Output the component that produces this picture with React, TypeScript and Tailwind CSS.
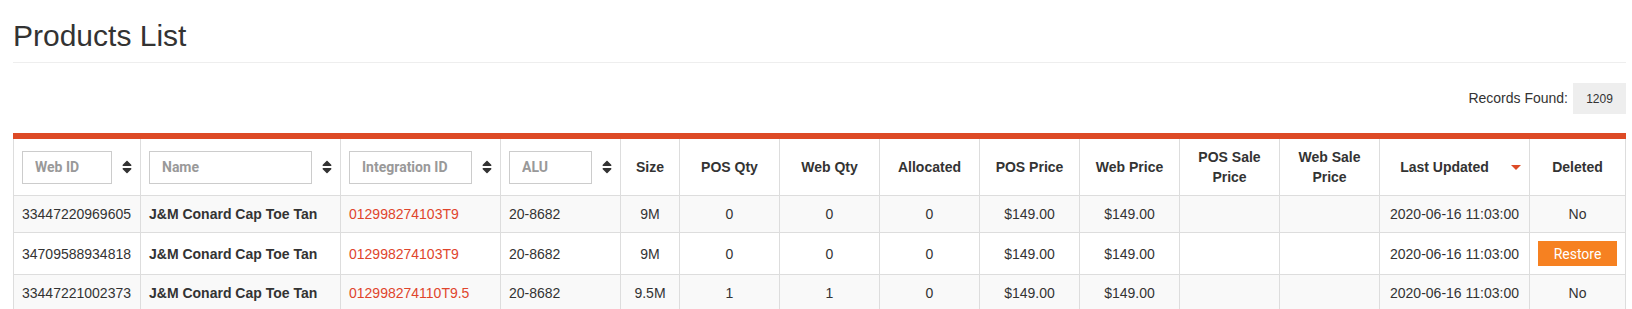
import React from 'react';

interface Product {
  webId: string;
  name: string;
  integrationId: string;
  alu: string;
  size: string;
  posQty: number;
  webQty: number;
  allocated: number;
  posPrice: string;
  webPrice: string;
  posSalePrice: string;
  webSalePrice: string;
  lastUpdated: string;
  deleted: boolean;
}

const products: Product[] = [
  {
    webId: '33447220969605',
    name: 'J&M Conard Cap Toe Tan',
    integrationId: '012998274103T9',
    alu: '20-8682',
    size: '9M',
    posQty: 0,
    webQty: 0,
    allocated: 0,
    posPrice: '$149.00',
    webPrice: '$149.00',
    posSalePrice: '',
    webSalePrice: '',
    lastUpdated: '2020-06-16 11:03:00',
    deleted: false,
  },
  {
    webId: '34709588934818',
    name: 'J&M Conard Cap Toe Tan',
    integrationId: '012998274103T9',
    alu: '20-8682',
    size: '9M',
    posQty: 0,
    webQty: 0,
    allocated: 0,
    posPrice: '$149.00',
    webPrice: '$149.00',
    posSalePrice: '',
    webSalePrice: '',
    lastUpdated: '2020-06-16 11:03:00',
    deleted: true,
  },
  {
    webId: '33447221002373',
    name: 'J&M Conard Cap Toe Tan',
    integrationId: '012998274110T9.5',
    alu: '20-8682',
    size: '9.5M',
    posQty: 1,
    webQty: 1,
    allocated: 0,
    posPrice: '$149.00',
    webPrice: '$149.00',
    posSalePrice: '',
    webSalePrice: '',
    lastUpdated: '2020-06-16 11:03:00',
    deleted: false,
  },
];

// up/down sort arrows
const SortIcon = () => (
  <svg className="w-[10px] h-[16px] shrink-0" viewBox="0 0 320 512" fill="#333">
    <path d="M41 288h238c21.4 0 32.1 25.9 17 41L177 448c-9.4 9.4-24.6 9.4-33.9 0L24 329c-15.1-15.1-4.4-41 17-41zm255-105L177 64c-9.4-9.4-24.6-9.4-33.9 0L24 183c-15.1 15.1-4.4 41 17 41h238c21.4 0 32.1-25.9 17-41z" />
  </svg>
);

const FilterHeader = ({ placeholder }: { placeholder: string }) => (
  <th className="border border-t-0 border-[#ddd] px-2 py-2 align-middle">
    <div className="flex items-center gap-[10px]">
      <input
        type="text"
        placeholder={placeholder}
        className="min-w-0 flex-1 h-[33px] border border-[#ccc] bg-white px-3 text-[14px] font-bold font-['Roboto',sans-serif] text-[#333] placeholder:font-bold placeholder:text-[#999] outline-none"
      />
      <SortIcon />
    </div>
  </th>
);

const TextHeader = ({ label }: { label: string }) => (
  <th className="border border-t-0 border-[#ddd] px-2 py-2 text-center align-middle font-bold leading-5">
    {label}
  </th>
);

const App: React.FC = () => {
  return (
    <div className="min-h-screen bg-white pl-[13px] pr-[6px] font-['Liberation_Sans',Arial,sans-serif] text-[14px] text-[#333]">
      {/* Page title */}
      <div className="pt-[19px] pb-[10px] border-b border-[#eee]">
        <h1 className="text-[30px] leading-[33px] font-normal">Products List</h1>
      </div>

      {/* Records count */}
      <div className="flex items-center justify-end gap-[5px] mt-[20px] mb-[19px]">
        <span>Records Found:</span>
        <span className="flex h-[31px] w-[53px] items-center justify-center bg-[#eee] text-[12px]">1209</span>
      </div>

      {/* Table */}
      <div className="border-t-[6px] border-[#dd4a26]">
        <table className="w-full table-fixed border-collapse">
          <colgroup>
            <col className="w-[127px]" />
            <col className="w-[200px]" />
            <col className="w-[160px]" />
            <col className="w-[120px]" />
            <col className="w-[59px]" />
            <col className="w-[100px]" />
            <col className="w-[100px]" />
            <col className="w-[100px]" />
            <col className="w-[100px]" />
            <col className="w-[100px]" />
            <col className="w-[100px]" />
            <col className="w-[100px]" />
            <col className="w-[150px]" />
            <col />
          </colgroup>
          <thead>
            <tr className="bg-white">
              <FilterHeader placeholder="Web ID" />
              <FilterHeader placeholder="Name" />
              <FilterHeader placeholder="Integration ID" />
              <FilterHeader placeholder="ALU" />
              <TextHeader label="Size" />
              <TextHeader label="POS Qty" />
              <TextHeader label="Web Qty" />
              <TextHeader label="Allocated" />
              <TextHeader label="POS Price" />
              <TextHeader label="Web Price" />
              <TextHeader label="POS Sale Price" />
              <TextHeader label="Web Sale Price" />
              <th className="border border-t-0 border-[#ddd] px-2 py-2 align-middle font-bold leading-5">
                <div className="flex items-center">
                  <span className="flex-1 text-center">Last Updated</span>
                  <span className="ml-[10px] h-0 w-0 border-x-[5px] border-t-[5px] border-x-transparent border-t-[#dd4a26]" />
                </div>
              </th>
              <TextHeader label="Deleted" />
            </tr>
          </thead>
          <tbody>
            {products.map((p, idx) => (
              <tr key={p.webId} className={idx % 2 === 0 ? 'bg-[#f9f9f9]' : 'bg-white'}>
                <td className="border border-[#ddd] px-2 py-2 leading-5 whitespace-nowrap">{p.webId}</td>
                <td className="border border-[#ddd] px-2 py-2 leading-5 font-bold whitespace-nowrap">{p.name}</td>
                <td className="border border-[#ddd] px-2 py-2 leading-5 text-[#e0452c] whitespace-nowrap">{p.integrationId}</td>
                <td className="border border-[#ddd] px-2 py-2 leading-5">{p.alu}</td>
                <td className="border border-[#ddd] px-2 py-2 leading-5 text-center">{p.size}</td>
                <td className="border border-[#ddd] px-2 py-2 leading-5 text-center">{p.posQty}</td>
                <td className="border border-[#ddd] px-2 py-2 leading-5 text-center">{p.webQty}</td>
                <td className="border border-[#ddd] px-2 py-2 leading-5 text-center">{p.allocated}</td>
                <td className="border border-[#ddd] px-2 py-2 leading-5 text-center">{p.posPrice}</td>
                <td className="border border-[#ddd] px-2 py-2 leading-5 text-center">{p.webPrice}</td>
                <td className="border border-[#ddd] px-2 py-2 leading-5 text-center">{p.posSalePrice}</td>
                <td className="border border-[#ddd] px-2 py-2 leading-5 text-center">{p.webSalePrice}</td>
                <td className="border border-[#ddd] px-2 py-2 leading-5 text-center whitespace-nowrap">{p.lastUpdated}</td>
                <td className="border border-[#ddd] px-2 py-2 leading-5 text-center">
                  {p.deleted ? (
                    <button className="flex h-[25px] w-full items-center justify-center bg-[#f68121] font-['Roboto',sans-serif] text-[14px] text-white">
                      Restore
                    </button>
                  ) : (
                    'No'
                  )}
                </td>
              </tr>
            ))}
          </tbody>
        </table>
      </div>
    </div>
  );
};

export default App;
